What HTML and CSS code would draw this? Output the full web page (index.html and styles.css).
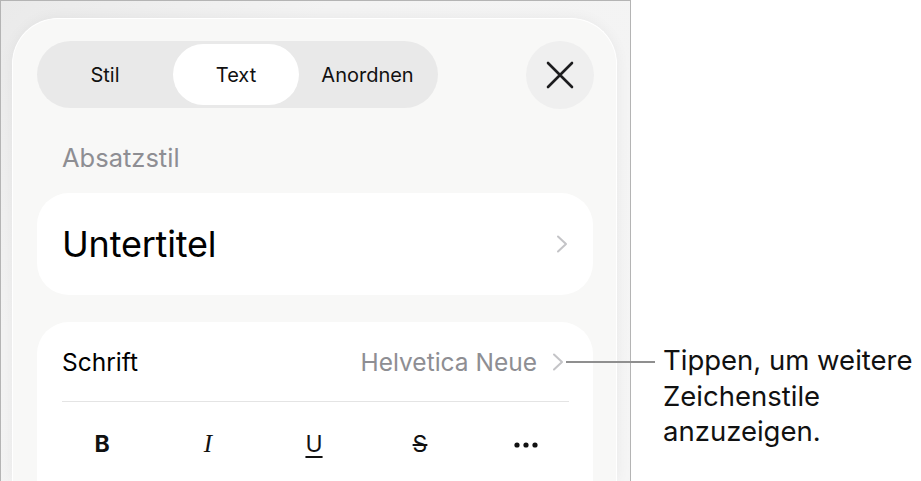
FILE: index.html
```html
<!DOCTYPE html>
<html lang="de">
<head>
<meta charset="utf-8">
<title>Text – Format</title>
<link rel="stylesheet" href="styles.css">
</head>
<body>
<div class="stage">
  <div class="device">
    <div class="sheet">
      <div class="top-row">
        <div class="segmented">
          <span class="seg">Stil</span>
          <span class="seg seg-active">Text</span>
          <span class="seg">Anordnen</span>
        </div>
        <button class="close" aria-label="Schließen">
          <svg width="28" height="28" viewBox="0 0 28 28" aria-hidden="true">
            <path d="M2 2 L26 26 M26 2 L2 26" stroke="#1c1c1e" stroke-width="2.6" stroke-linecap="round" fill="none"/>
          </svg>
        </button>
      </div>

      <div class="section-label">Absatzstil</div>

      <div class="card card-style">
        <span class="style-name">Untertitel</span>
        <svg class="chevron" width="12" height="18" viewBox="0 0 12 18" aria-hidden="true">
          <path d="M2 1.5 L10 9 L2 16.5" stroke="#c4c4c7" stroke-width="2" stroke-linecap="round" stroke-linejoin="round" fill="none"/>
        </svg>
      </div>

      <div class="card card-font">
        <div class="font-row">
          <span class="font-label">Schrift</span>
          <span class="font-value">Helvetica Neue</span>
          <svg class="chevron" width="12" height="18" viewBox="0 0 12 18" aria-hidden="true">
            <path d="M2 1.5 L10 9 L2 16.5" stroke="#c4c4c7" stroke-width="2" stroke-linecap="round" stroke-linejoin="round" fill="none"/>
          </svg>
        </div>
        <div class="divider"></div>
        <div class="format-row">
          <span class="fmt fmt-bold">B</span>
          <span class="fmt fmt-italic">I</span>
          <span class="fmt fmt-underline">U</span>
          <span class="fmt fmt-strike">S</span>
          <span class="fmt fmt-more">
            <svg width="24" height="6" viewBox="0 0 24 6" aria-hidden="true">
              <circle cx="3" cy="3" r="2.6" fill="#111"/>
              <circle cx="12" cy="3" r="2.6" fill="#111"/>
              <circle cx="21" cy="3" r="2.6" fill="#111"/>
            </svg>
          </span>
        </div>
      </div>
    </div>
  </div>

  <div class="callout-line"></div>
  <p class="callout-text">Tippen, um weitere<br>Zeichenstile<br>anzuzeigen.</p>
</div>
</body>
</html>
```

FILE: styles.css
```css
* {
  box-sizing: border-box;
}

html, body {
  margin: 0;
  padding: 0;
  background: #ffffff;
}

body {
  font-family: Inter, "Noto Sans", "Liberation Sans", sans-serif;
  color: #000;
}

.stage {
  position: relative;
  display: flex;
  width: 921px;
  height: 481px;
  overflow: hidden;
}

/* iPad-style frame holding the format popover */
.device {
  flex-shrink: 0;
  width: 631px;
  height: 481px;
  border: 1px solid #b4b4b4;
  border-bottom: none;
  background: linear-gradient(135deg, #eaeaea 0%, #f3f3f3 30%, #f5f5f5 100%);
  padding: 17px 13px 0 11px;
  overflow: hidden;
}

.sheet {
  height: 100%;
  border: 1px solid #ffffff;
  border-bottom: none;
  border-radius: 46px 46px 0 0;
  background: #f8f8f7;
  box-shadow: 0 0 14px rgba(0, 0, 0, 0.05);
  padding: 22px 23px 0 24px;
}

.top-row {
  display: flex;
  justify-content: space-between;
  align-items: center;
  height: 67px;
}

.segmented {
  display: grid;
  grid-template-columns: 130px 130px 1fr;
  width: 401px;
  height: 67px;
  padding: 3px;
  border-radius: 34px;
  background: #e9e9e9;
}

.seg {
  display: flex;
  align-items: center;
  justify-content: center;
  font-size: 20px;
  color: #111;
  border-radius: 31px;
}

.seg-active {
  background: #ffffff;
  margin: 0 1px 0 3px;
}

.close {
  width: 68px;
  height: 68px;
  border: none;
  border-radius: 50%;
  background: #efefef;
  display: flex;
  align-items: center;
  justify-content: center;
  padding: 0;
  margin-right: -1px;
}

.section-label {
  margin: 37px 0 22px 25px;
  height: 26px;
  line-height: 26px;
  font-size: 25.5px;
  color: #8e8e93;
}

.card {
  background: #ffffff;
  border-radius: 32px;
}

.card-style {
  height: 102px;
  display: flex;
  align-items: center;
  justify-content: space-between;
  padding: 0 25px 0 25px;
}

.style-name {
  font-size: 36px;
  letter-spacing: -0.2px;
}

.card-font {
  margin-top: 27px;
  padding: 0 24px 0 25px;
  height: 200px;
  border-radius: 32px 32px 0 0;
}

.font-row {
  display: flex;
  align-items: center;
  height: 79px;
}

.font-label {
  font-size: 24.5px;
  flex: 1;
}

.font-value {
  font-size: 24.5px;
  color: #8e8e93;
  margin-right: 15px;
}

.font-row .chevron {
  margin-right: 5px;
}

.divider {
  height: 1px;
  background: #e4e4e4;
}

.format-row {
  display: grid;
  grid-template-columns: repeat(5, 106px);
  margin-left: -13px;
  height: 84px;
  align-items: center;
}

.fmt {
  display: flex;
  justify-content: center;
  align-items: center;
  font-size: 23px;
  color: #111;
}

.fmt-bold {
  font-weight: 700;
}

.fmt-italic {
  font-family: "Liberation Serif", "DejaVu Serif", serif;
  font-style: italic;
  font-size: 25px;
}

.fmt-underline {
  text-decoration: underline;
  text-underline-offset: 4px;
  text-decoration-thickness: 1.5px;
}

.fmt-strike {
  text-decoration: line-through;
  text-decoration-thickness: 1.5px;
}

.fmt-more {
  padding-top: 2px;
}

/* annotation pointing at the font chevron */
.callout-line {
  position: absolute;
  left: 566px;
  top: 361px;
  width: 89px;
  height: 2px;
  background: #8f8f8f;
}

.callout-text {
  position: absolute;
  left: 663px;
  top: 343px;
  margin: 0;
  font-size: 27.5px;
  line-height: 35.5px;
  color: #111;
}
```
